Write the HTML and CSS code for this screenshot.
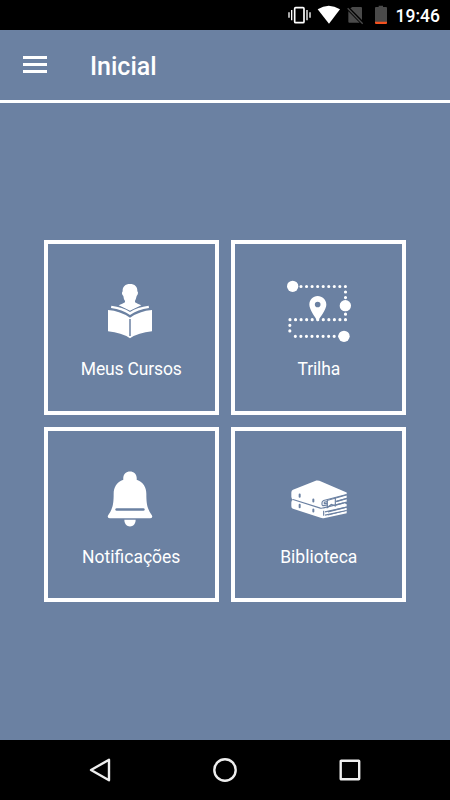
FILE: index.html
```html
<!DOCTYPE html>
<html lang="pt-BR">
<head>
  <meta charset="UTF-8" />
  <meta name="viewport" content="width=device-width, initial-scale=1.0" />
  <title>Inicial</title>
  <link rel="stylesheet" href="styles.css">
</head>
<body>

  <!-- Status bar -->
  <div class="status-bar">
    <svg class="status-icons" viewBox="0 0 330 90">
      <g fill="none" stroke="#fff" stroke-width="4">
        <rect x="44" y="23" width="28" height="45" rx="3" stroke-width="5" />
        <path d="M35 30V61M27 37V53M81 30V61M90 37V53" />
      </g>
      <path d="M113 28Q146 7 180 28L147 71Z" fill="#fff" />
      <path d="M217 21H243Q246 21 246 24V60L211 25ZM205 34L239 68H208Q205 68 205 65Z" fill="#4a4a4a" />
      <path d="M203 25L248 71" stroke="#4a4a4a" stroke-width="4" />
      <path d="M285 66V24Q285 21 288 21H296V17H309V21H318Q321 21 321 24V66Z" fill="#4a4a4a" />
      <path d="M285 65H321V69Q321 72 318 72H288Q285 72 285 69Z" fill="#f4511e" />
    </svg>
    <span class="clock">19:46</span>
  </div>

  <header class="toolbar">
    <button class="menu-btn" aria-label="Menu">
      <span></span>
      <span></span>
      <span></span>
    </button>
    <h1>Inicial</h1>
  </header>

  <main class="content">
    <div class="grid">
      <a class="tile">
        <svg viewBox="-6 -9 228 228">
          <path d="M105 27C119 27 128 35 127 49C131 52 128 61 125 63Q122 75 120 78V82Q127 87 139 91L105 107L71 91Q83 87 90 82V78Q86 73 85 63C80 59 80 52 83 49C82 35 91 27 105 27Z" fill="#fff" />
          <path d="M49 92Q83 96 105 111Q127 96 161 92L162 99Q128 104 105 120Q82 104 48 99Z" fill="#fff" stroke="#6b81a2" stroke-width="4" paint-order="stroke" />
          <path d="M39 105Q76 108 105 128Q134 108 171 105V169Q130 173 105 190Q80 173 39 169Z" fill="#fff" />
          <path d="M105 132V183" stroke="#6b81a2" stroke-width="4.500" />
        </svg>
        <span>Meus Cursos</span>
      </a>

      <a class="tile">
        <svg viewBox="2 0 228 228">
          <path d="M62 43.500H196M195.500 60V143M195.500 143H28M28.500 160V193M45 193H180" fill="none" stroke="#fff" stroke-width="9.500" stroke-linecap="round" stroke-dasharray="0 16.650" />
          <circle cx="37" cy="43" r="17" fill="#fff" />
          <circle cx="195" cy="101" r="17" fill="#fff" />
          <circle cx="191" cy="193" r="17" fill="#fff" />
          <path fill-rule="evenodd" d="M112 72C126 72 138 83 138 98C138 112 121 133 112 148C103 133 87 112 87 98C87 83 98 72 112 72ZM112 89A8.500 8.500 0 1 0 112 106A8.500 8.500 0 1 0 112 89Z" fill="#fff" />
        </svg>
        <span>Trilha</span>
      </a>

      <a class="tile tile-bottom">
        <svg viewBox="-6 -10.5 228 228">
          <path d="M105 27C117 27 127 36 125 52C145 59 154 76 154 94C154 126 157 139 171 159Q174 167 166 167H44Q36 167 39 159C53 139 56 126 56 94C56 76 65 59 85 52C83 36 93 27 105 27Z" fill="#fff" />
          <path d="M65 141H145" stroke="#6b81a2" stroke-width="8" stroke-linecap="round" />
          <path d="M88 172H122C122 185 114 192 105 192C96 192 88 185 88 172Z" fill="#fff" />
        </svg>
        <span>Notificações</span>
      </a>

      <a class="tile tile-bottom">
        <svg viewBox="2 -34.5 228 228">
          <path d="M38 58L108 30Q112 29 117 31L199 66V71L143 88V91L199 75V82L168 91V95L199 86V94L193 98L199 101V108L143 122V126L199 112V119L143 132V135L199 121V128L130 143Q126 144 121 142L38 115Q33 113 33 107V96Q33 90 38 88Q33 85 33 79V66Q33 60 38 58Z" fill="#fff" />
          <g fill="none" stroke="#6b81a2" stroke-width="3.500">
            <path d="M38 87L120 113Q125 114 130 112L190 97" />
            <path d="M199 72L130 90Q125 92 125 97V102Q126 107 133 105L141 103M199 84L166 93M199 95L166 104M141 93L132 95V100L141 98" />
            <path d="M141 88V111L153 102L165 106V82" />
            <path d="M199 110L134 124M199 120L134 134M130 121V136" />
          </g>
          <g fill="none" stroke="#6b81a2" stroke-width="6" stroke-linecap="round">
            <path d="M58 72V79M99 87V93M58 103V110M99 117V123" />
          </g>
        </svg>
        <span>Biblioteca</span>
      </a>
    </div>
  </main>

  <!-- Android navigation bar -->
  <nav class="nav-bar">
    <svg viewBox="0 0 26 26"><path d="M22 2.800V23.200L4 13Z" /></svg>
    <svg viewBox="0 0 26 26"><circle cx="13" cy="13" r="10.700" /></svg>
    <svg viewBox="0 0 26 26"><rect x="3.700" y="3.700" width="18.500" height="18.500" rx="0.500" /></svg>
  </nav>

</body>
</html>
```

FILE: styles.css
```css
* {
  box-sizing: border-box;
}

body {
  margin: 0;
  height: 100vh;
  display: flex;
  flex-direction: column;
  font-family: Roboto, sans-serif;
  background-color: #6b81a2;
  color: #fff;
}

.status-bar {
  height: 30px;
  background: #000;
  display: flex;
  justify-content: flex-end;
  align-items: center;
  padding-right: 10px;
}

.status-icons {
  width: 110px;
  height: 30px;
  margin-right: 6px;
}

.clock {
  font-size: 17.5px;
  font-weight: 500;
  line-height: 30px;
  padding-top: 2px;
}

.toolbar {
  height: 73px;
  display: flex;
  align-items: center;
  padding-left: 23px;
  border-bottom: 3px solid #fff;
}

.menu-btn {
  display: flex;
  flex-direction: column;
  gap: 4px;
  width: 24px;
  padding: 0;
  margin-right: 43px;
  margin-bottom: 1px;
  border: none;
  background: none;
}

.menu-btn span {
  height: 3px;
  background: #fff;
}

.toolbar h1 {
  margin: 3px 0 0;
  font-size: 25px;
  font-weight: 500;
}

.content {
  flex: 1;
  display: flex;
  justify-content: center;
  align-items: center;
  padding-bottom: 1px;
}

.grid {
  display: grid;
  grid-template-columns: 175px 175px;
  grid-auto-rows: 175px;
  gap: 12px 12.5px;
}

.tile {
  display: flex;
  flex-direction: column;
  align-items: center;
  padding-top: 28px;
  border: 4px solid #fff;
  cursor: pointer;
}

.tile svg {
  width: 76px;
  height: 76px;
}

.tile span {
  margin-top: 10px;
  font-size: 17.5px;
  line-height: 22px;
  letter-spacing: -0.15px;
}

.tile-bottom span {
  margin-top: 11px;
  letter-spacing: 0;
}

.nav-bar {
  height: 60px;
  background: #000;
  display: flex;
  justify-content: center;
  align-items: center;
  gap: 99px;
}

.nav-bar svg {
  width: 26px;
  height: 26px;
  fill: none;
  stroke: #eee;
  stroke-width: 2.4;
  stroke-linejoin: round;
}
```
